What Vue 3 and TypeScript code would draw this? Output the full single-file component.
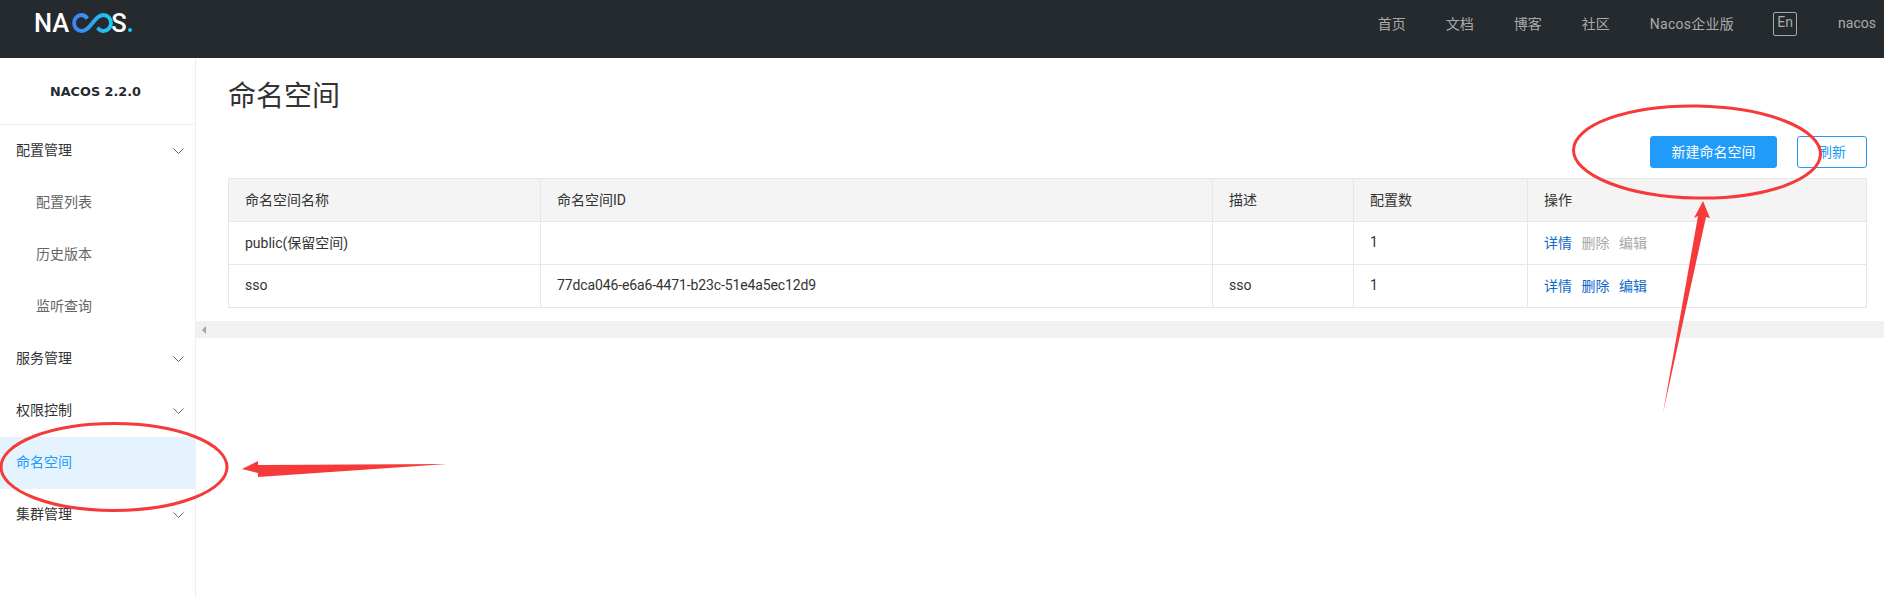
<script setup lang="ts">
const navItems: string[] = ['首页', '文档', '博客', '社区', 'Nacos企业版']
interface MenuItem { label: string; kind: 'group' | 'sub' | 'active' }
const menu: MenuItem[] = [
  { label: '配置管理', kind: 'group' },
  { label: '配置列表', kind: 'sub' },
  { label: '历史版本', kind: 'sub' },
  { label: '监听查询', kind: 'sub' },
  { label: '服务管理', kind: 'group' },
  { label: '权限控制', kind: 'group' },
  { label: '命名空间', kind: 'active' },
  { label: '集群管理', kind: 'group' },
]
const rows = [
  { name: 'public(保留空间)', id: '', desc: '', count: 1, locked: true },
  { name: 'sso', id: '77dca046-e6a6-4471-b23c-51e4a5ec12d9', desc: 'sso', count: 1, locked: false },
]
</script>

<template>
  <div class="page">
    <header class="topbar">
      <div class="logo">
        <span class="logo-text">NA</span>
        <svg class="logo-loop" width="41" height="20" viewBox="0 0 41 20">
          <defs>
            <linearGradient id="loopGrad" x1="0" y1="0" x2="1" y2="0">
              <stop offset="0" stop-color="#3d82f5" />
              <stop offset="1" stop-color="#1fc8f0" />
            </linearGradient>
          </defs>
          <path d="M15.5 5.400C13.800 3.400 12 2 9.600 2 5.300 2 2 5.600 2 10s3.300 8 7.600 8c5 0 7.700-4 10.900-8s5.900-8 10.900-8C35.700 2 39 5.600 39 10s-3.300 8-7.600 8c-2.400 0-4.200-1.200-5.900-3.200" fill="none" stroke="url(#loopGrad)" stroke-width="3.800" />
        </svg>
        <span class="logo-text logo-s">S</span>
        <span class="logo-dot"></span>
      </div>
      <nav class="nav">
        <a v-for="item in navItems" :key="item" class="nav-item"><span class="nudge">{{ item }}</span></a>
        <span class="lang">En</span>
        <span class="user nudge">nacos</span>
      </nav>
    </header>

    <div class="body">
      <aside class="sidebar">
        <div class="version">NACOS 2.2.0</div>
        <div v-for="item in menu" :key="item.label" class="menu-item" :class="item.kind">
          <span class="menu-label">{{ item.label }}</span>
          <svg v-if="item.kind === 'group'" class="chevron" width="11" height="6" viewBox="0 0 11 6">
            <path d="M.5.5l5 5 5-5" fill="none" stroke="#666" stroke-width="1" />
          </svg>
        </div>
      </aside>

      <main class="main">
        <h1 class="title">命名空间</h1>
        <div class="toolbar">
          <button class="btn primary">新建命名空间</button>
          <button class="btn outline">刷新</button>
        </div>
        <table class="grid">
          <colgroup>
            <col class="col-name" />
            <col class="col-id" />
            <col class="col-desc" />
            <col class="col-count" />
            <col />
          </colgroup>
          <thead>
            <tr>
              <th>命名空间名称</th>
              <th>命名空间ID</th>
              <th>描述</th>
              <th>配置数</th>
              <th>操作</th>
            </tr>
          </thead>
          <tbody>
            <tr v-for="row in rows" :key="row.name">
              <td>{{ row.name }}</td>
              <td class="uuid">{{ row.id }}</td>
              <td>{{ row.desc }}</td>
              <td>{{ row.count }}</td>
              <td>
                <a class="link">详情</a>
                <a class="link" :class="{ off: row.locked }">删除</a>
                <a class="link" :class="{ off: row.locked }">编辑</a>
              </td>
            </tr>
          </tbody>
        </table>
        <div class="scrollbar"><span class="scroll-arrow"></span></div>
      </main>
    </div>

    <svg class="marks" width="1884" height="597" viewBox="0 0 1884 597">
      <ellipse cx="1697" cy="152" rx="123.500" ry="46" fill="none" stroke="#f63a3a" stroke-width="3" transform="rotate(1 1697 152)" />
      <ellipse cx="114" cy="467" rx="113" ry="43.500" fill="none" stroke="#f63a3a" stroke-width="3" />
      <polygon points="242,469 258,461 258,465 447,464 258,477 258,473" fill="#f63a3a" />
      <polygon points="1703,201 1710,218 1706,217 1663,413 1698,216 1694,218" fill="#f63a3a" />
    </svg>
  </div>
</template>

<style>
html, body { margin: 0; background: #fff; }
</style>

<style scoped>
.page {
  position: relative;
  width: 1884px;
  height: 597px;
  overflow: hidden;
  font-family: Roboto, "Noto Sans CJK SC", sans-serif;
  font-size: 14px;
  color: #333;
}
.topbar {
  height: 58px;
  background: #252a2f;
  display: flex;
  align-items: flex-start;
  justify-content: space-between;
}
.logo {
  display: flex;
  align-items: center;
  height: 20px;
  margin: 13px 0 0 34px;
  color: #fff;
}
.logo-text {
  font-family: Roboto, sans-serif;
  font-size: 25.500px;
  font-weight: 500;
  line-height: 20px;
}
.logo-s { margin-left: -2px; }
.logo-loop { margin: 0 0 0 3px; }
.logo-dot {
  width: 4px;
  height: 4px;
  background: #1fc8f0;
  margin: 14px 0 0 1px;
  border-radius: 50%;
}
.nav {
  display: flex;
  align-items: center;
  height: 48px;
  color: #aaa;
  padding-right: 8px;
}
.nudge { display: block; margin-bottom: 2px; }
.nav-item { margin-right: 40px; }
.nav-item:last-of-type { margin-right: 39px; letter-spacing: .28px; }
.lang {
  box-sizing: border-box;
  width: 24px;
  height: 24px;
  border: 1px solid #aaa;
  border-radius: 2px;
  text-align: center;
  line-height: 18px;
  margin-right: 41px;
}
.body { display: flex; height: 539px; }
.sidebar {
  width: 195px;
  flex: none;
  border-right: 1px solid #eee;
}
.version {
  height: 66px;
  padding-right: 4px;
  box-sizing: content-box;
  border-bottom: 1px solid #eee;
  display: flex;
  align-items: center;
  justify-content: center;
  font-family: "DejaVu Sans", sans-serif;
  font-size: 12.800px;
  font-weight: 700;
  color: #252a2f;
}
.menu-item {
  height: 52px;
  display: flex;
  align-items: center;
  justify-content: space-between;
  padding: 0 11px 0 16px;
}
.menu-label { margin-bottom: 4px; }
.menu-item.sub { padding-left: 36px; color: #666; }
.menu-item.active { background: #e4f3fe; color: #209bfa; }
.chevron { flex: none; }
.main { flex: 1; min-width: 0; }
.title {
  margin: 0;
  padding: 19px 0 0 32px;
  height: 59px;
  box-sizing: border-box;
  font-size: 28px;
  font-weight: 400;
  line-height: 40px;
  color: #333;
}
.toolbar {
  display: flex;
  justify-content: flex-end;
  gap: 20px;
  margin-top: 19px;
  padding-right: 17px;
}
.btn {
  height: 32px;
  padding: 0 0 2px;
  border-radius: 3px;
  font: inherit;
  box-sizing: border-box;
}
.primary {
  width: 127px;
  background: #209bfa;
  border: 1px solid #209bfa;
  color: #fff;
}
.outline {
  width: 70px;
  background: #fff;
  border: 1px solid #209bfa;
  color: #209bfa;
}
.grid {
  width: 1639px;
  margin: 10px 0 0 32px;
  border-collapse: collapse;
  table-layout: fixed;
}
.col-name { width: 312px; }
.col-id { width: 672px; }
.col-desc { width: 141px; }
.col-count { width: 174px; }
.grid th, .grid td {
  height: 43px;
  padding: 0 16px 3px;
  box-sizing: border-box;
  border: 1px solid #e6e6e6;
  text-align: left;
  font-weight: 400;
  white-space: nowrap;
}
.grid th { background: #f4f4f4; }
.uuid { letter-spacing: -0.13px; }
.link { color: #1069c9; margin-right: 9.500px; }
.link.off { color: #a8a8a8; }
.scrollbar {
  height: 17px;
  margin-top: 13px;
  background: #f1f1f1;
  display: flex;
  align-items: center;
  padding-left: 6px;
}
.scroll-arrow {
  width: 0;
  height: 0;
  border-style: solid;
  border-width: 4px 4px 4px 0;
  border-color: transparent #a3a3a3 transparent transparent;
}
.marks {
  position: absolute;
  left: 0;
  top: 0;
  pointer-events: none;
}
</style>
